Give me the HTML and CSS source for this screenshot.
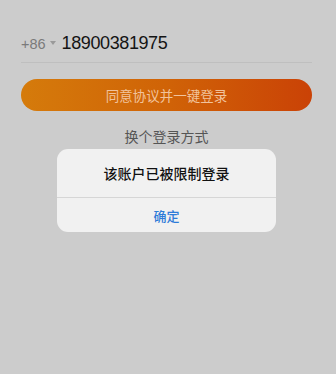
FILE: index.html
```html
<!DOCTYPE html>
<html lang="zh">
<head>
<meta charset="utf-8">
<link rel="stylesheet" href="styles.css">
</head>
<body>
<div class="page">
  <div class="phone-row">
    <span class="code">+86</span>
    <span class="caret"></span>
    <span class="number">18900381975</span>
  </div>
  <div class="login-btn">同意协议并一键登录</div>
  <div class="switch">换个登录方式</div>
</div>
<div class="alert">
  <div class="alert-title">该账户已被限制登录</div>
  <div class="alert-action">确定</div>
</div>
</body>
</html>
```
FILE: styles.css
```css
html, body {
  margin: 0;
  padding: 0;
}
body {
  width: 336px;
  height: 374px;
  background: #cccccc;
  font-family: "Liberation Sans", "Noto Sans CJK SC", sans-serif;
  position: relative;
  overflow: hidden;
}
.page {
  padding: 31px 24px 0 21px;
  display: flex;
  flex-direction: column;
}
.phone-row {
  display: flex;
  align-items: baseline;
  height: 24px;
  line-height: 24px;
  padding-bottom: 7px;
  border-bottom: 1px solid #bfbfbf;
}
.code {
  font-size: 14.5px;
  color: #7a7a7a;
}
.caret {
  width: 0;
  height: 0;
  border-left: 3px solid transparent;
  border-right: 3px solid transparent;
  border-top: 4px solid #9a9a9a;
  margin: 0 6px 0 4px;
  align-self: center;
}
.number {
  font-size: 18px;
  color: #141414;
  letter-spacing: -0.4px;
}
.login-btn {
  margin-top: 16px;
  height: 32px;
  border-radius: 16px;
  background: linear-gradient(90deg, #d57b0b 0%, #d06307 50%, #ca4206 100%);
  color: #f1c39c;
  font-family: "Noto Sans CJK SC", sans-serif;
  font-size: 13.5px;
  display: flex;
  align-items: center;
  justify-content: center;
}
.switch {
  margin-top: 15px;
  line-height: 20px;
  text-align: center;
  font-family: "Noto Sans CJK SC", sans-serif;
  font-size: 14px;
  color: #555555;
}
.alert {
  position: absolute;
  left: 57px;
  top: 149px;
  width: 219px;
  height: 83px;
  background: #f1f1f1;
  border-radius: 11px;
  display: flex;
  flex-direction: column;
  font-family: "Noto Sans CJK SC", sans-serif;
  overflow: hidden;
}
.alert-title {
  height: 49px;
  display: flex;
  align-items: center;
  justify-content: center;
  font-size: 14px;
  font-weight: 500;
  color: #111111;
  border-bottom: 1px solid #d6d6d6;
  box-sizing: border-box;
}
.alert-action {
  flex: 1;
  display: flex;
  align-items: center;
  justify-content: center;
  font-size: 13px;
  font-weight: 500;
  color: #2d7bd8;
}
```
